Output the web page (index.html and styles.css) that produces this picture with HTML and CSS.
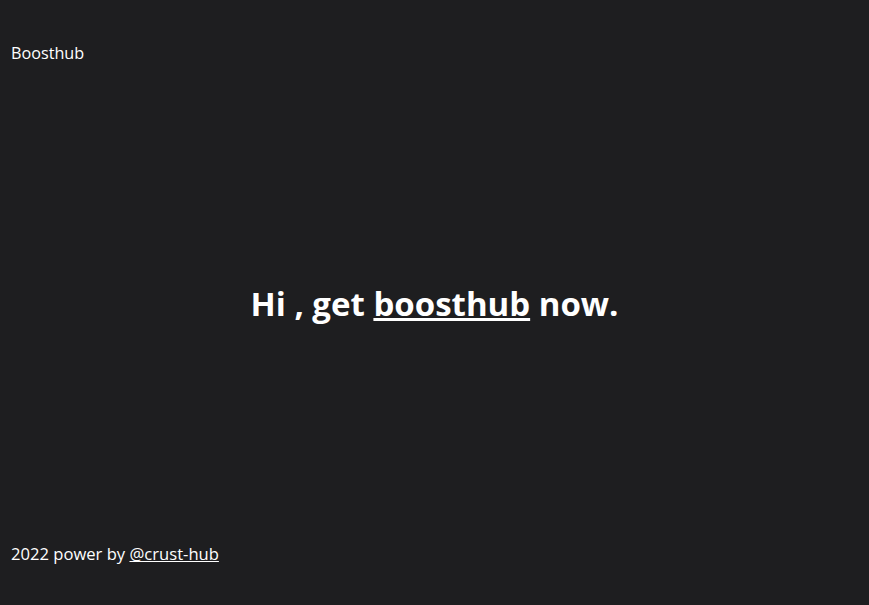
FILE: index.html
```html
<!DOCTYPE html>
<html>
<head>
<meta charset="utf-8">
<link rel="stylesheet" href="styles.css">
</head>
<body>
<div class="page">
  <header class="header">Boosthub</header>
  <main class="main">
    <h1 class="title">Hi , get <a class="link" href="#">boosthub</a> now.</h1>
  </main>
  <footer class="footer">2022 power by <a class="link" href="#">@crust-hub</a></footer>
</div>
</body>
</html>
```
FILE: styles.css
```css
html, body {
  margin: 0;
  padding: 0;
  height: 100%;
  background: #1e1e20;
}
.page {
  height: 100vh;
  box-sizing: border-box;
  display: flex;
  flex-direction: column;
  padding: 42px 11px 40px;
  color: #ffffff;
  font-family: "Open Sans", "Noto Sans", sans-serif;
  font-size: 16px;
}
.header {
  line-height: 22px;
  font-size: 16.2px;
}
.main {
  flex: 1;
  display: flex;
  align-items: center;
  justify-content: center;
}
.title {
  margin: 0;
  font-size: 33px;
  font-weight: 700;
  line-height: 1.2;
}
.link {
  color: #ffffff;
  text-decoration: underline;
}
.footer {
  line-height: 22px;
  font-size: 16.6px;
}
```
